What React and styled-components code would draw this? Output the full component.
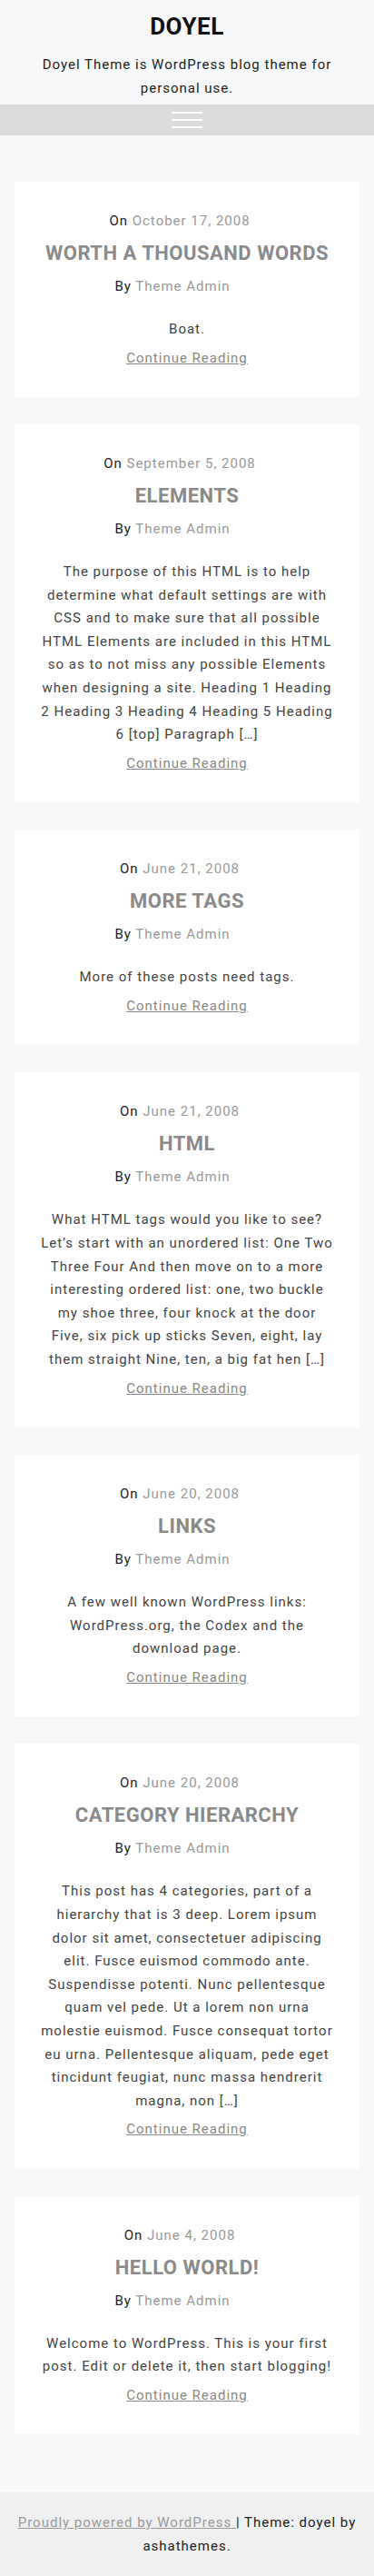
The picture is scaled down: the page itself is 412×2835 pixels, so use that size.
import React from 'react';
import styled, { createGlobalStyle } from 'styled-components';

const GlobalStyle = createGlobalStyle`
  * { box-sizing: border-box; }
  body {
    margin: 0;
    background: #f6f8f9;
    font-family: Roboto, "Liberation Sans", sans-serif;
    color: #444;
  }
`;

const Page = styled.div`
  display: flex;
  flex-direction: column;
  min-height: 2835px;
`;

const Header = styled.header`
  text-align: center;
  padding: 11px 16px 0;
`;

const SiteTitle = styled.h1`
  margin: 0;
  font-size: 26px;
  line-height: 36px;
  font-weight: 700;
  color: #111;
  letter-spacing: 0.5px;
`;

const Tagline = styled.p`
  margin: 11px 0 0;
  padding: 0 30px 5px;
  font-size: 15px;
  line-height: 26px;
  letter-spacing: 1px;
  color: #222;
`;

const NavBar = styled.nav`
  height: 34px;
  background: #dcdcdc;
  display: flex;
  justify-content: center;
  align-items: center;
`;

const MenuButton = styled.button`
  background: none;
  border: none;
  padding: 0;
  width: 34px;
  display: flex;
  flex-direction: column;
  gap: 6px;
  cursor: pointer;

  span {
    display: block;
    height: 2px;
    background: #fff;
  }
`;

const Main = styled.main`
  flex: 1;
  padding: 51px 16px;
  display: flex;
  flex-direction: column;
  gap: 30.5px;
`;

const Card = styled.article`
  background: #fff;
  padding: 30px 28.5px;
  text-align: center;
`;

const Meta = styled.div`
  font-size: 15px;
  line-height: 26px;
  letter-spacing: 1px;
  color: #222;
  padding-right: ${p => p.$shift}px;

  a {
    color: #999;
    text-decoration: none;
  }
`;

const PostTitle = styled.h2`
  margin: 8px 0;
  font-size: 22px;
  line-height: 30px;
  font-weight: 700;
  text-transform: uppercase;
  letter-spacing: 0.5px;
  color: #8a8a8a;
`;

const Excerpt = styled.p`
  margin: 22px 0 5px;
  font-size: 15px;
  line-height: 25.6px;
  letter-spacing: 1px;
  color: #444;
`;

const ReadMore = styled.a`
  display: inline-block;
  font-size: 15px;
  line-height: 26px;
  letter-spacing: 1px;
  color: #888;
  text-decoration: underline;
`;

const Footer = styled.footer`
  background: #f0f0f0;
  padding: 20px 16px;
  text-align: center;
  font-size: 15px;
  line-height: 26px;
  letter-spacing: 1px;
  color: #222;

  a {
    color: #999;
  }
`;

const posts = [
  {
    date: 'October 17, 2008',
    title: 'Worth a Thousand Words',
    excerpt: 'Boat.',
  },
  {
    date: 'September 5, 2008',
    title: 'Elements',
    excerpt:
      'The purpose of this HTML is to help determine what default settings are with CSS and to make sure that all possible HTML Elements are included in this HTML so as to not miss any possible Elements when designing a site. Heading 1 Heading 2 Heading 3 Heading 4 Heading 5 Heading 6 [top] Paragraph […]',
  },
  {
    date: 'June 21, 2008',
    title: 'More Tags',
    excerpt: 'More of these posts need tags.',
  },
  {
    date: 'June 21, 2008',
    title: 'HTML',
    excerpt:
      'What HTML tags would you like to see? Let’s start with an unordered list: One Two Three Four And then move on to a more interesting ordered list: one, two buckle my shoe three, four knock at the door Five, six pick up sticks Seven, eight, lay them straight Nine, ten, a big fat hen […]',
  },
  {
    date: 'June 20, 2008',
    title: 'Links',
    excerpt:
      'A few well known WordPress links: WordPress.org, the Codex and the download page.',
  },
  {
    date: 'June 20, 2008',
    title: 'Category Hierarchy',
    excerpt:
      'This post has 4 categories, part of a hierarchy that is 3 deep. Lorem ipsum dolor sit amet, consectetuer adipiscing elit. Fusce euismod commodo ante. Suspendisse potenti. Nunc pellentesque quam vel pede. Ut a lorem non urna molestie euismod. Fusce consequat tortor eu urna. Pellentesque aliquam, pede eget tincidunt feugiat, nunc massa hendrerit magna, non […]',
  },
  {
    date: 'June 4, 2008',
    title: 'Hello world!',
    excerpt:
      'Welcome to WordPress. This is your first post. Edit or delete it, then start blogging!',
  },
];

const Post = ({ post }) => (
  <Card>
    <Meta $shift={16}>
      On <a href="#">{post.date}</a>
    </Meta>
    <PostTitle>{post.title}</PostTitle>
    <Meta $shift={32}>
      By <a href="#">Theme Admin</a>
    </Meta>
    <Excerpt>{post.excerpt}</Excerpt>
    <ReadMore href="#">Continue Reading</ReadMore>
  </Card>
);

export default function App() {
  return (
    <Page>
      <GlobalStyle />
      <Header>
        <SiteTitle>DOYEL</SiteTitle>
        <Tagline>Doyel Theme is WordPress blog theme for personal use.</Tagline>
      </Header>
      <NavBar>
        <MenuButton aria-label="Menu">
          <span />
          <span />
          <span />
        </MenuButton>
      </NavBar>
      <Main>
        {posts.map((post, i) => (
          <Post key={i} post={post} />
        ))}
      </Main>
      <Footer>
        <a href="#">Proudly powered by WordPress </a> | Theme: doyel by ashathemes.
      </Footer>
    </Page>
  );
}
